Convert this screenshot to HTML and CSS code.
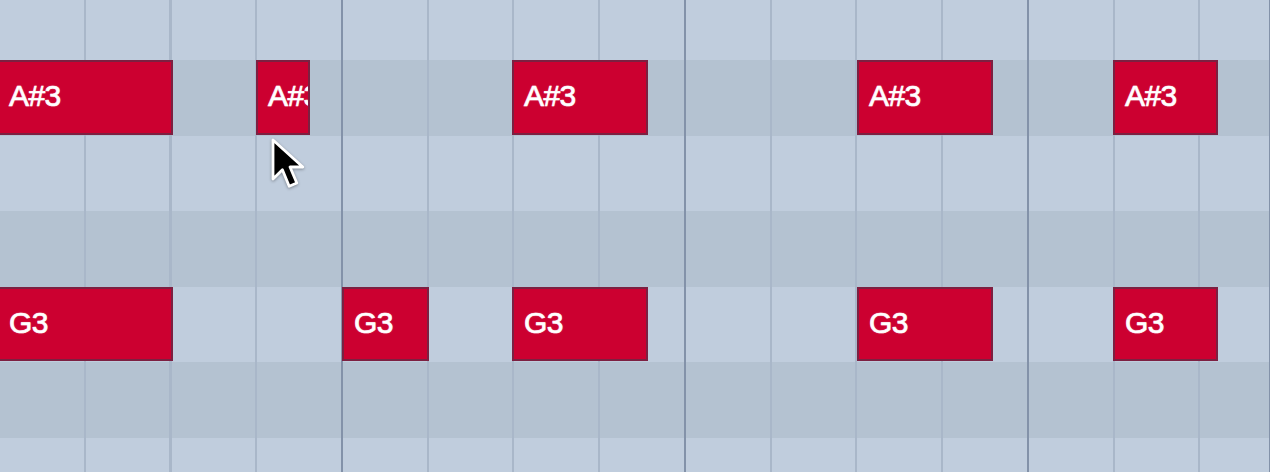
FILE: index.html
```html
<!DOCTYPE html>
<html lang="en">

<head>
    <meta charset="UTF-8">
    <meta name="viewport" content="width=device-width, initial-scale=1.0">
    <title>Piano Roll</title>
    <link rel="stylesheet" href="styles.css">
</head>

<body>

    <main class="roll">

        <div class="lane white" data-pitch="B3"></div>

        <div class="lane black" data-pitch="A#3">
            <div class="note" style="left: -3px; width: 176px;">A#3</div>
            <div class="note" style="left: 256px; width: 54px;">A#3</div>
            <div class="note" style="left: 512px; width: 136px;">A#3</div>
            <div class="note" style="left: 857px; width: 136px;">A#3</div>
            <div class="note" style="left: 1113px; width: 105px;">A#3</div>
        </div>

        <div class="lane white" data-pitch="A3"></div>

        <div class="lane black" data-pitch="G#3"></div>

        <div class="lane white" data-pitch="G3">
            <div class="note" style="left: -3px; width: 176px;">G3</div>
            <div class="note" style="left: 342px; width: 87px;">G3</div>
            <div class="note" style="left: 512px; width: 136px;">G3</div>
            <div class="note" style="left: 857px; width: 136px;">G3</div>
            <div class="note" style="left: 1113px; width: 105px;">G3</div>
        </div>

        <div class="lane black" data-pitch="F#3"></div>

        <div class="lane white" data-pitch="F3"></div>

        <!-- puntero del ratón -->
        <svg class="pointer" width="40" height="56" viewBox="0 0 20 28">
            <path d="M1.5 1.5 L1.5 21 L6.2 16.4 L9.6 24.6 L13.4 23 L10 15 L16.4 15 Z"
                fill="#000" stroke="#fff" stroke-width="1.4" stroke-linejoin="round" />
        </svg>

    </main>

</body>

</html>
```

FILE: styles.css
```css
body {
    margin: 0;
    font-family: "Liberation Sans", Arial, Helvetica, sans-serif;
    background: #c0cddd;
    height: 100vh;
    overflow: hidden;
}

.roll {
    position: relative;
    display: flex;
    flex-direction: column;
    margin-top: -15.6px;
}

/* cada carril es una tecla; las líneas de compás y de tiempo van en el fondo */
.lane {
    position: relative;
    height: 75.6px;
    flex-shrink: 0;

    background:
        repeating-linear-gradient(to right,
            #8392a9 0 1px,
            transparent 1px 342px,
            #8392a9 342px 343px),
        repeating-linear-gradient(to right,
            #a9b7c9 0 1px,
            transparent 1px 84.75px,
            #a9b7c9 84.75px 85.75px),
        var(--lane-bg);
    background-position: -1px 0, -1px 0, 0 0;

    &.white {
        --lane-bg: #c0cddd;
    }

    &.black {
        --lane-bg: #b4c2d1;
    }
}

.note {
    position: absolute;
    top: 0;
    height: 74.5px;
    box-sizing: border-box;
    display: flex;
    align-items: center;
    padding-left: 10px;
    padding-bottom: 2px;
    overflow: hidden;
    white-space: nowrap;

    background: #cc0030;
    border: 2px solid #7c2041;

    color: #fff;
    font-size: 30px;
    letter-spacing: -0.6px;
    -webkit-text-stroke: 0.6px #fff;
    text-shadow: 0 0 1.5px rgba(255, 255, 255, 0.6);
}

.pointer {
    position: absolute;
    left: 270px;
    top: 153px;
    filter: drop-shadow(0 1px 1.5px rgba(0, 0, 0, 0.35));
}
```
